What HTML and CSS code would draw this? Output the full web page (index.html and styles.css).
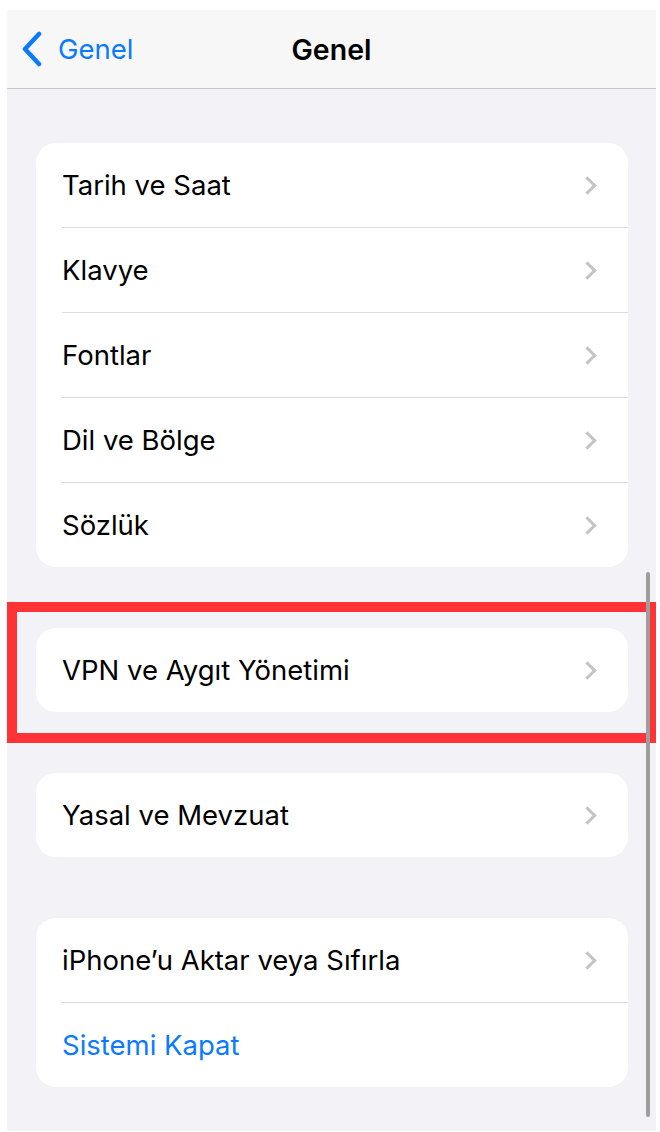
FILE: index.html
```html
<!DOCTYPE html>
<html lang="tr">
<head>
    <meta charset="UTF-8">
    <meta name="viewport" content="width=device-width, initial-scale=1.0">
    <title>Genel</title>
    <link rel="stylesheet" href="styles.css">
</head>
<body>
    <div class="screen">
        <header class="nav">
            <a class="back" href="#">
                <svg class="back-icon" width="22" height="36" viewBox="0 0 22 36">
                    <path d="M18 3 L4 18 L18 33" fill="none" stroke="#0a7aff" stroke-width="4.5" stroke-linecap="round" stroke-linejoin="round"/>
                </svg>
                <span>Genel</span>
            </a>
            <h1 class="title">Genel</h1>
        </header>

        <div class="content">
            <div class="group">
                <div class="row"><span>Tarih ve Saat</span><i class="chev"></i></div>
                <div class="row"><span>Klavye</span><i class="chev"></i></div>
                <div class="row"><span>Fontlar</span><i class="chev"></i></div>
                <div class="row"><span>Dil ve Bölge</span><i class="chev"></i></div>
                <div class="row"><span>Sözlük</span><i class="chev"></i></div>
            </div>

            <div class="group">
                <div class="row"><span>VPN ve Aygıt Yönetimi</span><i class="chev"></i></div>
            </div>

            <div class="group">
                <div class="row"><span>Yasal ve Mevzuat</span><i class="chev"></i></div>
            </div>

            <div class="group">
                <div class="row"><span>iPhone’u Aktar veya Sıfırla</span><i class="chev"></i></div>
                <div class="row link"><span>Sistemi Kapat</span></div>
            </div>
        </div>

        <div class="highlight"></div>
        <div class="scrollbar"></div>
    </div>
</body>
</html>
```

FILE: styles.css
```css
html, body {
    margin: 0;
    padding: 0;
    background-color: #ffffff;
}
body {
    font-family: "Inter", "Roboto", "Noto Sans", sans-serif;
    color: #000000;
}
.screen {
    position: relative;
    margin: 10px 4px 0 7px;
    height: 1121px;
    background-color: #f2f2f7;
    overflow: hidden;
}
.nav {
    position: relative;
    height: 78px;
    background-color: #f7f7f7;
    border-bottom: 1px solid #c8c8ca;
    display: flex;
    align-items: center;
    justify-content: center;
}
.back {
    position: absolute;
    left: 14px;
    top: 0;
    height: 78px;
    display: flex;
    align-items: center;
    gap: 15px;
    color: #0a7aff;
    text-decoration: none;
    font-size: 27.5px;
}
.title {
    margin: 0;
    font-size: 28.5px;
    font-weight: 600;
}
.content {
    padding: 54px 28px 0 29px;
    display: flex;
    flex-direction: column;
    gap: 61px;
}
.group {
    background-color: #ffffff;
    border-radius: 20px;
    overflow: hidden;
}
.row {
    height: 84px;
    margin-left: 26px;
    padding-right: 30px;
    display: flex;
    align-items: center;
    justify-content: space-between;
    font-size: 27.5px;
    border-bottom: 1px solid #dcdce0;
}
.row:last-child {
    border-bottom: none;
}
.row.link {
    color: #0a7aff;
}
.chev {
    width: 10px;
    height: 10px;
    border-top: 3px solid #c4c4c7;
    border-right: 3px solid #c4c4c7;
    transform: rotate(45deg);
    margin-right: 4px;
}
.highlight {
    position: absolute;
    left: 0;
    top: 592px;
    width: 629px;
    height: 121px;
    border: 10px solid #ff3336;
}
.scrollbar {
    position: absolute;
    left: 639px;
    top: 562px;
    width: 4px;
    height: 545px;
    border-radius: 2px;
    background-color: #9e9e9e;
}
```
